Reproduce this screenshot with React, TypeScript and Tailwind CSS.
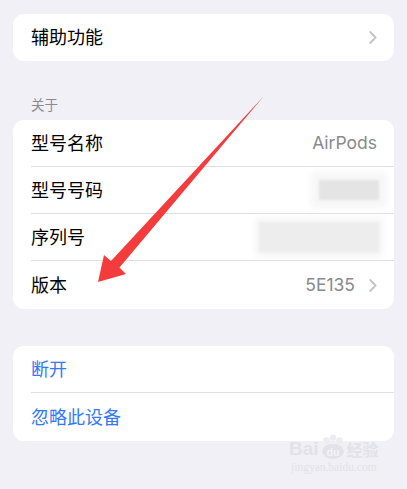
import React from "react";

const font = "font-['Inter','Noto_Sans_CJK_SC',sans-serif]";

function Chevron() {
  return (
    <svg width="8" height="13" viewBox="0 0 8 13" className="shrink-0">
      <path d="M1.2 1 L6.6 6.5 L1.2 12" fill="none" stroke="#c4c4c8" strokeWidth="1.8" strokeLinecap="round" strokeLinejoin="round" />
    </svg>
  );
}

function Row({ children, last }: { children: React.ReactNode; last?: boolean }) {
  return (
    <div className="pl-[18px]">
      <div
        className={`flex items-center justify-between pr-[17px] ${last ? "h-[48px]" : "h-[47px] border-b border-[#dfdfe3]"}`}
      >
        {children}
      </div>
    </div>
  );
}

export default function App() {
  return (
    <div className={`relative w-[407px] h-[489px] overflow-hidden bg-[#f1f0f6] ${font}`}>
      <div className="flex flex-col px-[13px] pt-[14px]">
        {/* Accessibility */}
        <div className="bg-white rounded-[11px] h-[47px] flex items-center justify-between pl-[18px] pr-[17px]">
          <span className="text-[18px] text-black">辅助功能</span>
          <Chevron />
        </div>

        {/* About */}
        <div className="mt-[36px] h-[16px] leading-[16px] pl-[18px] text-[13.5px] text-[#8a8a8e]">关于</div>
        <div className="mt-[7px] bg-white rounded-[11px] overflow-hidden">
          <Row>
            <span className="text-[18px] text-black">型号名称</span>
            <span className="text-[17.5px] text-[#8a8a8e]">AirPods</span>
          </Row>
          <Row>
            <span className="text-[18px] text-black">型号号码</span>
            <div className="relative w-[60px] h-[20px] mr-[-2px]">
              <div className="absolute -inset-[8px] bg-[#f7f7f7] blur-[3px]" />
              <div className="absolute inset-0 bg-[#e4e4e4] blur-[1px]" />
            </div>
          </Row>
          <Row>
            <span className="text-[18px] text-black">序列号</span>
            <div className="relative w-[120px] h-[30px] mr-[-2px]">
              <div className="absolute -inset-[4px] bg-[#f5f5f5] blur-[3px]" />
              <div className="absolute inset-0 bg-[#ededed] blur-[1px]" />
            </div>
          </Row>
          <Row last>
            <span className="text-[18px] text-black">版本</span>
            <div className="flex items-center gap-[14px]">
              <span className="text-[17.5px] text-[#8a8a8e]">5E135</span>
              <Chevron />
            </div>
          </Row>
        </div>

        {/* Actions */}
        <div className="mt-[37px] bg-white rounded-[11px] overflow-hidden">
          <Row>
            <span className="text-[18px] text-[#3478f6]">断开</span>
          </Row>
          <Row last>
            <span className="text-[18px] text-[#3478f6]">忽略此设备</span>
          </Row>
        </div>
      </div>

      {/* Watermark */}
      <div className="absolute left-[289px] top-[434px] flex flex-col items-center text-[#e2e2e8] pointer-events-none">
        <div className="flex items-end gap-[1px] font-bold text-[19px] leading-[22px]">
          <span className="font-['Liberation_Sans',sans-serif]">Bai</span>
          <svg width="26" height="26" viewBox="0 0 24 24">
            <circle cx="6" cy="6" r="3" fill="#ececf1" />
            <circle cx="12" cy="3.5" r="3" fill="#ececf1" />
            <circle cx="18" cy="6" r="3" fill="#ececf1" />
            <ellipse cx="12" cy="16" rx="10" ry="7" fill="#e2e2e8" />
            <text x="12" y="20" textAnchor="middle" fontSize="10" fill="#f4f4f8" fontFamily="Liberation Sans">du</text>
          </svg>
          <span className="text-[16px] font-['Noto_Sans_CJK_SC',sans-serif]">经验</span>
        </div>
        <span className="text-[11.5px] leading-[13px] mt-[1px] font-['Liberation_Serif',serif]">jingyan.baidu.com</span>
      </div>

      {/* Red arrow annotation */}
      <svg className="absolute left-0 top-0 pointer-events-none" width="407" height="489" viewBox="0 0 407 489">
        <polygon
          points="263.5,96.5 119.5,267.5 126,274 98,282 104,255 111,261 262.5,97.5"
          fill="#f43c3c"
        />
      </svg>
    </div>
  );
}
